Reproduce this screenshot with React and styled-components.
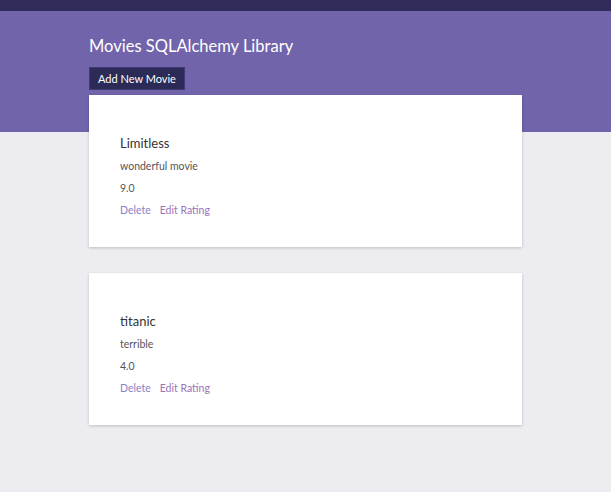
import React from 'react'
import styled, { createGlobalStyle } from 'styled-components'

const Global = createGlobalStyle`
  body {
    margin: 0;
    background-color: #edecf1;
    font-family: 'Lato', 'Open Sans', sans-serif;
  }
`

const Page = styled.div`
  min-height: 492px;
  background: linear-gradient(to bottom, #2f2c59 0, #2f2c59 11px, #7264ab 11px, #7264ab 132px, #edecf1 132px);
`

const Container = styled.div`
  width: 433px;
  margin-left: 89px;
  padding-top: 36px;
`

const Title = styled.h1`
  margin: 0;
  font-size: 16.5px;
  font-weight: 400;
  color: #ffffff;
  line-height: 20px;
`

const AddButton = styled.button`
  margin-top: 11px;
  height: 23px;
  padding: 0 8px;
  border: 1px solid #3f3a73;
  background-color: #2c2a56;
  color: #ffffff;
  font-family: inherit;
  font-size: 11px;
  cursor: pointer;
`

const List = styled.div`
  display: flex;
  flex-direction: column;
  gap: 26px;
  margin-top: 5px;
`

const Card = styled.div`
  background-color: #ffffff;
  height: 152px;
  box-sizing: border-box;
  padding: 40px 31px 0;
  box-shadow: 0 1px 3px rgba(0, 0, 0, 0.2);
  display: flex;
  flex-direction: column;
`

const Name = styled.div`
  font-size: 13px;
  color: #333333;
  line-height: 17px;
`

const Line = styled.div`
  font-size: 10.5px;
  color: #555555;
  margin-top: 7px;
  line-height: 15px;
`

const Actions = styled.div`
  display: flex;
  gap: 9px;
  margin-top: 7px;
`

const Action = styled.a`
  font-size: 10.5px;
  line-height: 15px;
  color: ${(p) => p.$color};
  text-decoration: none;
  cursor: pointer;
`

const movies = [
  { title: 'Limitless', review: 'wonderful movie', rating: '9.0' },
  { title: 'titanic', review: 'terrible', rating: '4.0' },
]

const App = () => {
  return (
    <Page>
      <Global />
      <Container>
        <Title>Movies SQLAlchemy Library</Title>
        <AddButton>Add New Movie</AddButton>
        <List>
          {movies.map((m) => (
            <Card key={m.title}>
              <Name>{m.title}</Name>
              <Line>{m.review}</Line>
              <Line>{m.rating}</Line>
              <Actions>
                <Action $color="#8884c6">Delete</Action>
                <Action $color="#9b72b9">Edit Rating</Action>
              </Actions>
            </Card>
          ))}
        </List>
      </Container>
    </Page>
  )
}

export default App
